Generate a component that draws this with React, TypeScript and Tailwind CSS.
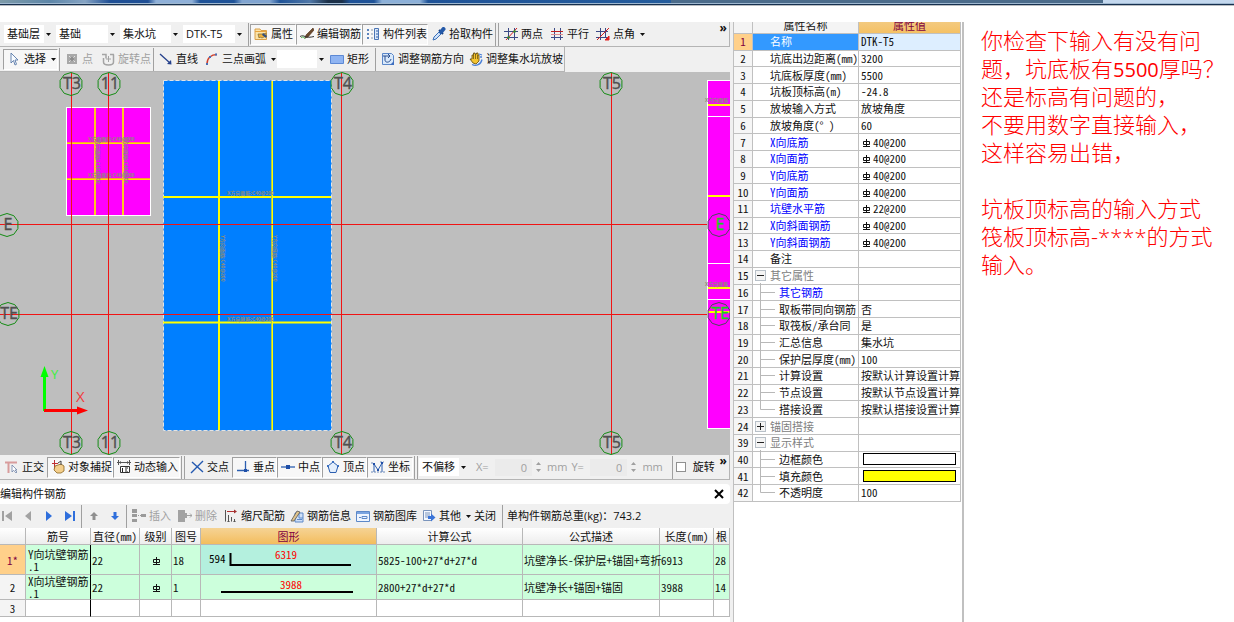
import type { ReactNode } from "react";

type IconName =
  | "props" | "pen" | "list" | "dropper" | "twoPoint" | "parallel" | "pointAngle"
  | "cursor" | "point" | "rotatePoint" | "line" | "arc" | "rect" | "direction" | "slope"
  | "ortho" | "snap" | "dynamic" | "cross" | "perp" | "mid" | "vertex" | "coord"
  | "first" | "prev" | "next" | "last" | "up" | "down"
  | "insert" | "remove" | "scale" | "info" | "library" | "other";

const ICONS: Record<IconName, ReactNode> = {
  props: (
    <>
      <path d="M1 2h5l1 1.500h5.500v9H1z" fill="#fbe3a8" stroke="#d9a04a" />
      <path d="M1 4.500h11.500" stroke="#e8a33c" />
      <path d="M4 7h5l3-1v3l-4 2-2-1-1 1z" fill="#f2b23a" stroke="#7b6a3a" strokeWidth=".7" />
      <path d="M9 6l4 3-1 2-4-3z" fill="#34507c" />
    </>
  ),
  pen: (
    <>
      <path d="M13 1 6 8l-1 3 3-1 6-7z" fill="#6b4a2c" stroke="#4b2a14" strokeWidth=".6" />
      <path d="M0 9.500c2-1 3-1 5 0s5 1 9 0" stroke="#333" />
      <path d="M1 11c2-2 3-1 4 1" stroke="#37a137" fill="none" />
    </>
  ),
  list: (
    <>
      <path d="M1 3h2M1 7h2M1 11h2" stroke="#5c84bc" strokeWidth="2" />
      <path d="M5 3h2M5 7h2M5 11h2" stroke="#8899aa" />
      <path d="M8.500 1.500h4v11h-4z" fill="#dbe8f8" stroke="#4a74b4" />
      <path d="M10 4h2M10 7h2M10 10h2" stroke="#2f5fa8" />
    </>
  ),
  dropper: (
    <>
      <path d="M1 13l1-3 5-5 2 2-5 5z" fill="#cfe2fa" stroke="#3a6fb8" />
      <path d="M7 3l4 4" stroke="#173a78" strokeWidth="2" />
      <path d="M9 5l2.500-3" stroke="#2459a8" strokeWidth="4" strokeLinecap="round" />
    </>
  ),
  twoPoint: (
    <>
      <path d="M4.500 1v12M10.500 1v12M0 4.500h14M0 10.500h14" stroke="#3c4a86" />
      <path d="M2 13 13 1" stroke="#d02020" />
      <circle cx="4.500" cy="10.500" r="1.300" fill="#2e8b2e" />
      <circle cx="10.500" cy="4.500" r="1.300" fill="#2e8b2e" />
    </>
  ),
  parallel: (
    <>
      <path d="M4.500 1v12M10.500 1v12" stroke="#3c4a86" />
      <path d="M1 4.500h12" stroke="#c02020" />
      <path d="M1 7.500h12" stroke="#e09090" />
      <path d="M1 10.500h12" stroke="#3c4a86" />
    </>
  ),
  pointAngle: (
    <>
      <path d="M4.500 1v12M9.500 1v9M0 4.500h12M0 10.500h12" stroke="#3c4a86" />
      <path d="M1 13 13 1" stroke="#d02020" />
      <path d="M13 9v4H9z" fill="#e02020" stroke="#e02020" />
    </>
  ),
  cursor: <path d="M4 1v10l2.500-2.500L8 13l1.500-.7L8 8h3z" fill="#f7fbff" stroke="#5878a8" strokeWidth=".9" />,
  point: (
    <>
      <path d="M2 2h10v10H2z" fill="#a8a8a8" />
      <path d="M4 4l6 6M10 4l-6 6" stroke="#e4e4e4" />
      <circle cx="7" cy="7" r="2" fill="#8c8c8c" />
    </>
  ),
  rotatePoint: (
    <>
      <path d="M1 2.500h4v4M2.500 6v4c0 4 10 4 10 0V2.500M9 2.500h4" stroke="#a4a4a4" strokeWidth="1.500" fill="none" />
      <path d="M7.500 4v6M5 7h5" stroke="#a4a4a4" />
    </>
  ),
  line: (
    <>
      <path d="M1 2l10 9" stroke="#24408c" strokeWidth="1.300" />
      <path d="M12.500 12.500 8 12l4-4z" fill="#24408c" />
    </>
  ),
  arc: (
    <>
      <path d="M2 12C2 6 6 2.500 12 2.500" stroke="#d0402c" strokeWidth="1.400" fill="none" />
      <path d="M1 11h2v2H1zM4 4h2v2H4zM10 1.500h2v2h-2z" fill="#4a6fb5" />
    </>
  ),
  rect: <path d="M.5 3.500h13v8H.5z" fill="#8fb4f2" stroke="#5c88d4" />,
  direction: (
    <>
      <path d="M1.500 1.500h9l2 2v9h-11z" fill="#d8e8fa" stroke="#5a86c8" />
      <path d="M4 4v4c0 3 5 3 6-1M2 4h7l-2-2M7 6l2-2" stroke="#2a4f90" fill="none" />
      <path d="M9 13l4-4v4z" fill="#3f6fc0" />
    </>
  ),
  slope: (
    <>
      <path d="M3 7V3h1.500V1H6v1h1.500V1H9v2h1v6l-3 3-3-1-3-4z" fill="#f4c430" stroke="#5e4708" strokeWidth=".8" />
      <path d="M4.500 3v4M6.500 2v5M8.500 3v4" stroke="#5e4708" strokeWidth=".7" />
      <path d="M3 12.500c4 2 9 0 10-5M10 2l3 1M11 5h2" stroke="#4a80d8" fill="none" strokeWidth="1.300" />
    </>
  ),
  ortho: (
    <>
      <path d="M0 2.500h12M3.500 2.500V13" stroke="#d89c9c" strokeWidth="2" />
      <path d="M7 5v7l1.700-1.700L11 13l1-1-2-2h2z" fill="#fff" stroke="#7084a8" strokeWidth=".8" />
    </>
  ),
  snap: (
    <>
      <path d="M1 3.500h6M3.500 0v10" stroke="#c03030" />
      <path d="M4 6l6-2 3 2v5l-3 2H6l-3-3z" fill="#f4cf8c" stroke="#8c6420" strokeWidth=".8" />
      <path d="M7 3l3-2v4" stroke="#444" fill="none" />
    </>
  ),
  dynamic: (
    <>
      <path d="M0 2.500h14M1.500 0v5M12.500 0v5" stroke="#555" />
      <path d="M2 2.500l2-1.500v3zM12 2.500l-2-1.500v3z" fill="#555" />
      <path d="M3.500 6.500h9v6h-9z" fill="#fff" stroke="#333" />
      <path d="M5.500 8v4M8 8h3M8 10h2M8 12h3" stroke="#222" />
    </>
  ),
  cross: <path d="M2 2l11 10M13 1 1 13" stroke="#2258b0" strokeWidth="1.400" />,
  perp: (
    <>
      <path d="M1 10.500h12M9.500 1v9" stroke="#2c5fb0" strokeWidth="1.300" />
      <path d="M8 9h3v3H8z" fill="#1f4fa8" />
    </>
  ),
  mid: (
    <>
      <path d="M0 7h14" stroke="#2c5fb0" strokeWidth="1.300" />
      <path d="M5 5h4v4H5z" fill="#1f4fa8" />
    </>
  ),
  vertex: (
    <>
      <path d="M7 2l5 4-2 6.500H4L2 6z" fill="#e4effc" stroke="#2c5fb0" />
      <path d="M6 1h2v2H6zM1 5h2v2H1zM11 5h2v2h-2z" fill="#3c70c0" />
    </>
  ),
  coord: (
    <>
      <path d="M3 12V4l4 6 4-7v9" stroke="#2c5fb0" fill="none" />
      <path d="M0 12h14M0 3h3M9 2h4" stroke="#6a88b8" strokeDasharray="2 1" />
      <path d="M2 3h2v2H2zM6 9h2v2H6zM10 2h2v2h-2z" fill="#1f4fa8" />
    </>
  ),
  first: <path d="M2 2h2v10H2zM12 2v10L5 7z" fill="#a2a2a2" />,
  prev: <path d="M10 2v10L4 7z" fill="#a2a2a2" />,
  next: <path d="M4 2v10l6-5z" fill="#2f6fdc" />,
  last: <path d="M10 2h2v10h-2zM2 2v10l7-5z" fill="#2f6fdc" />,
  up: <path d="M7 3l4 4H8.500v4h-3V7H3z" fill="#8f8f8f" />,
  down: <path d="M7 11 3 7h2.500V3h3v4H11z" fill="#2f6fdc" />,
  insert: (
    <>
      <path d="M0 0h5v4H0zM0 5h5v3H0zM0 10h5v3H0z" fill="#9a9a9a" />
      <path d="M6 6.500h3" stroke="#9a9a9a" strokeDasharray="1 1" />
      <path d="M9 5h5v3H9z" fill="#9a9a9a" />
    </>
  ),
  remove: (
    <>
      <path d="M0 1h7v3h2v5H7v4H0z" fill="#a2a2a2" />
      <path d="M9 6.500h5M12 4.500l2 2-2 2" stroke="#a2a2a2" fill="none" />
    </>
  ),
  scale: (
    <>
      <path d="M1.500 1v12M4.500 6v7M7.500 8v5M10.500 10v3" stroke="#555" />
      <path d="M3 2.500h8" stroke="#b03030" />
      <path d="M10 .5l3 2-3 2z" fill="#a03030" />
      <path d="M1 12.500h12" stroke="#999" strokeDasharray="1 1" />
    </>
  ),
  info: (
    <>
      <path d="M5 4h8v9H5z" fill="#cfe0f8" stroke="#5c88c8" />
      <path d="M9 4v5h4M7 10.500h5" stroke="#5c88c8" />
      <path d="M1 12 7 2l3 1-6 9z" fill="#e0c48c" stroke="#555" strokeWidth=".8" />
    </>
  ),
  library: (
    <>
      <path d="M.5 2.500h13v10H.5z" fill="#eef5ff" stroke="#5c88c8" />
      <path d="M1 4h12" stroke="#7aa4e0" strokeWidth="2" />
      <path d="M3 8.500h2M6 7.500h5v2H6z" stroke="#5c88c8" />
    </>
  ),
  other: (
    <>
      <path d="M1.500 1.500h8v10h-8z" fill="#f3f8ff" stroke="#7a94bc" />
      <path d="M3 4h5M3 6h5M3 8h3" stroke="#7a94bc" />
      <path d="M6 7h3V4.500L13.500 8.500 9 12.500V10H6z" fill="#3a74d8" />
    </>
  ),
};

function Icon({ name }: { name: IconName }) {
  return (
    <svg viewBox="0 0 14 14" className="size-[14px] shrink-0" fill="none" aria-hidden="true">
      {ICONS[name]}
    </svg>
  );
}

function Caret() {
  return (
    <svg viewBox="0 0 5 3" className="h-[3px] w-[5px] shrink-0" aria-hidden="true">
      <path d="M0 0h5L2.500 3z" fill="#111" />
    </svg>
  );
}

function Sep() {
  return <div className="mx-px h-[23px] w-px shrink-0 bg-[#a0a0a0]" />;
}

type ToolProps = {
  icon?: IconName;
  label: string;
  width?: string;
  pressed?: boolean;
  disabled?: boolean;
  caret?: boolean;
};

function Tool({ icon, label, width = "", pressed, disabled, caret }: ToolProps) {
  const look = pressed
    ? "border-t-[#a0a0a0] border-l-[#a0a0a0] border-r-white border-b-white bg-[#f7f7f7]"
    : "border-transparent";
  return (
    <button
      type="button"
      disabled={disabled}
      className={`flex h-[21px] shrink-0 items-center gap-[3px] border pl-[3px] whitespace-nowrap ${look} ${width} ${disabled ? "text-[#a0a0a0]" : ""}`}
    >
      {icon && <Icon name={icon} />}
      <span>{label}</span>
      {caret && <span className="ml-0.5"><Caret /></span>}
    </button>
  );
}

function IconButton({ icon, label }: { icon: IconName; label: string }) {
  return (
    <button type="button" aria-label={label} className="flex w-[21px] shrink-0 justify-center">
      <Icon name={icon} />
    </button>
  );
}

function Combo({ label, value, width }: { label: string; value: string; width: string }) {
  return (
    <div className={`relative h-[18px] shrink-0 bg-white ${width}`}>
      <select aria-label={label} className="h-full w-full appearance-none pl-[3px] outline-none">
        <option>{value}</option>
      </select>
      <div className="pointer-events-none absolute inset-y-0 right-0 flex w-[9px] items-center justify-center bg-[#f0f0f0]">
        <Caret />
      </div>
    </div>
  );
}

function OffsetInput({ label }: { label: string }) {
  return (
    <label className="flex shrink-0 items-center text-[#a0a0a0]">
      <span className="w-[19px]">{label}</span>
      <input defaultValue="0" disabled className="h-[17px] w-[37px] bg-[#ebebeb] pr-[5px] text-right" />
      <svg viewBox="0 0 12 14" className="h-[14px] w-[12px]" aria-hidden="true">
        <path d="M4 5l2.500-3L9 5zM4 9l2.500 3L9 9z" fill="#a0a0a0" />
      </svg>
      <span className="pl-[3px]">mm</span>
    </label>
  );
}

function More() {
  return <button type="button" aria-label="more" className="mr-0.5 ml-auto self-start text-xs leading-3 font-bold">»</button>;
}

/* axis bubbles on the drawing */
const RING = Array.from({ length: 10 }, (_, i) => {
  const a = (Math.PI * i) / 5;
  return `${(11.5 * Math.sin(a)).toFixed(1)},${(-11.5 * Math.cos(a)).toFixed(1)}`;
}).join(" ");

const BUBBLES = [
  { x: 71, y: 84, text: "T3" },
  { x: 109, y: 84, text: "11" },
  { x: 342, y: 84, text: "T4" },
  { x: 611, y: 84, text: "T5" },
  { x: 71, y: 443, text: "T3" },
  { x: 109, y: 443, text: "11" },
  { x: 342, y: 443, text: "T4" },
  { x: 611, y: 443, text: "T5" },
  { x: 7, y: 225, text: "E" },
  { x: 8, y: 314, text: "TE" },
  { x: 719, y: 225, text: "E", green: true },
  { x: 719, y: 314, text: "TE", green: true },
];

const BAR_NOTES = [
  { x: 88, y: 141, text: "X方向面筋:C40@200" },
  { x: 88, y: 177, text: "X方向底筋:C40@200" },
  { x: 227, y: 195, text: "X方向面筋:C40@200" },
  { x: 227, y: 321, text: "X方向底筋:C40@200" },
  { x: 705, y: 102, text: "X方向面筋" },
  { x: 705, y: 286, text: "X方向底筋" },
];

const BAR_NOTES_VERTICAL = [
  { x: 96, y: 137, text: "Y方向面筋:C40@200" },
  { x: 124, y: 137, text: "Y方向底筋:C40@200" },
  { x: 221, y: 235, text: "Y方向面筋:C40@200" },
  { x: 273, y: 235, text: "Y方向底筋:C40@200" },
];

function Drawing() {
  return (
    <div className="h-[383px] overflow-hidden bg-[#bebebe]">
      <svg viewBox="0 72 730 383" className="h-[383px] w-[730px]">
        <rect x="66.500" y="107.500" width="84" height="108" fill="#ff00ff" stroke="#fff" />
        <path d="M95 108v107M123 108v107" stroke="#ffc81e" strokeWidth="2" />
        <path d="M67 143h83M67 179h83" stroke="#ff9a3c" strokeWidth="2" />
        <path d="M67 143.500h83M67 179.500h83" stroke="#ffe000" />
        <rect x="163.500" y="80.500" width="168" height="350" fill="#007fff" />
        <rect x="163.500" y="80.500" width="168" height="350" fill="none" stroke="#e4e4e4" strokeDasharray="4 2" />
        <path d="M219 81v349M272 81v349M163 197h168M163 322.500h168" stroke="#ffff00" strokeWidth="2" />
        <path d="M271.500 81v349" stroke="#a8c850" />
        <rect x="707.500" y="80.500" width="30" height="348" fill="#ff00ff" stroke="#fff" />
        <path d="M708 116.500h22M708 263.500h22M708 299.500h22" stroke="#fff" />
        <path d="M708 105h22M708 196h22M708 288h22M708 312h22" stroke="#ffff00" strokeWidth="2" />
        <g fill="#8c8c78" fontSize="5" fontWeight="700">
          {BAR_NOTES.map((n) => (
            <text key={`${n.x}-${n.y}`} x={n.x} y={n.y}>{n.text}</text>
          ))}
          {BAR_NOTES_VERTICAL.map((n) => (
            <text key={n.x} transform={`translate(${n.x} ${n.y}) rotate(90)`}>{n.text}</text>
          ))}
        </g>
        <path d="M71.500 73v381M108.500 73v381M341.500 73v381M611.500 73v381M0 224.500h707M0 314.500h707" stroke="#f01414" />
        {BUBBLES.map((b) => (
          <g key={`${b.x}-${b.y}`} transform={`translate(${b.x} ${b.y})`}>
            <polygon points={RING} fill="none" stroke={b.green ? "#4a4a5a" : "#148c14"} />
            <text
              x="1"
              y="5"
              fontSize="16"
              fontWeight="500"
              textAnchor="middle"
              fill={b.green ? "#1ec81e" : "#505050"}
              stroke={b.green ? "#1ec81e" : "#505050"}
              strokeWidth=".4"
            >
              {b.text}
            </text>
          </g>
        ))}
        <path d="M44.500 411v-36" stroke="#00ff00" strokeWidth="3" />
        <path d="M44.500 366l4 11h-8z" fill="#00ff00" />
        <path d="M44 410.500h34" stroke="#ff0000" strokeWidth="3" />
        <path d="M88 410.500l-11 4v-8z" fill="#ff0000" />
        <text x="51" y="379" fontSize="13" fill="#3cf03c">Y</text>
        <text x="76" y="402" fontSize="15" fill="#f03c3c">X</text>
      </svg>
    </div>
  );
}

function RebarSign() {
  return (
    <svg viewBox="0 0 9 9" className="inline h-[9px] w-[9px] align-[-1px]" fill="none" stroke="#111" aria-label="HRB400">
      <path d="M1.500 2.500h6v3h-6zM4.500 0v8M1 7.500h7" />
    </svg>
  );
}

type Row = {
  no: number;
  name: string;
  value?: string;
  rebar?: boolean;
  blue?: boolean;
  toggle?: "+" | "-";
  child?: "mid" | "end";
  swatch?: string;
};

const ROWS: Row[] = [
  { no: 1, name: "名称", value: "DTK-T5" },
  { no: 2, name: "坑底出边距离(mm)", value: "3200" },
  { no: 3, name: "坑底板厚度(mm)", value: "5500" },
  { no: 4, name: "坑板顶标高(m)", value: "-24.8" },
  { no: 5, name: "放坡输入方式", value: "放坡角度" },
  { no: 6, name: "放坡角度(° )", value: "60" },
  { no: 7, name: "X向底筋", value: "40@200", rebar: true, blue: true },
  { no: 8, name: "X向面筋", value: "40@200", rebar: true, blue: true },
  { no: 9, name: "Y向底筋", value: "40@200", rebar: true, blue: true },
  { no: 10, name: "Y向面筋", value: "40@200", rebar: true, blue: true },
  { no: 11, name: "坑壁水平筋", value: "22@200", rebar: true, blue: true },
  { no: 12, name: "X向斜面钢筋", value: "40@200", rebar: true, blue: true },
  { no: 13, name: "Y向斜面钢筋", value: "40@200", rebar: true, blue: true },
  { no: 14, name: "备注" },
  { no: 15, name: "其它属性", toggle: "-" },
  { no: 16, name: "其它钢筋", blue: true, child: "mid" },
  { no: 17, name: "取板带同向钢筋", value: "否", child: "mid" },
  { no: 18, name: "取筏板/承台同", value: "是", child: "mid" },
  { no: 19, name: "汇总信息", value: "集水坑", child: "mid" },
  { no: 20, name: "保护层厚度(mm)", value: "100", child: "mid" },
  { no: 21, name: "计算设置", value: "按默认计算设置计算", child: "mid" },
  { no: 22, name: "节点设置", value: "按默认节点设置计算", child: "mid" },
  { no: 23, name: "搭接设置", value: "按默认搭接设置计算", child: "end" },
  { no: 24, name: "锚固搭接", toggle: "+" },
  { no: 39, name: "显示样式", toggle: "-" },
  { no: 40, name: "边框颜色", child: "mid", swatch: "bg-white" },
  { no: 41, name: "填充颜色", child: "mid", swatch: "bg-[#ffff00]" },
  { no: 42, name: "不透明度", value: "100", child: "end" },
];

function Branch({ end }: { end: boolean }) {
  return (
    <svg viewBox="0 0 26 15" className="h-[15px] w-[26px] shrink-0 overflow-visible" fill="none" stroke="#b8b8b8" aria-hidden="true">
      <path d={end ? "M7.500 -2V7.500H22" : "M7.500 -2V17M7.500 7.500H22"} />
    </svg>
  );
}

function NameCell({ row }: { row: Row }) {
  const color = row.toggle ? "text-[#808080]" : row.blue ? "text-[#0000ff]" : "";
  return (
    <div className={`flex items-center whitespace-nowrap ${color}`}>
      {row.child && <Branch end={row.child === "end"} />}
      {row.toggle && (
        <button type="button" aria-label={row.name} className="mr-1 ml-0.5 flex size-[11px] items-center justify-center border border-[#b8c0c8] bg-[#f4f4f4] text-black">
          <svg viewBox="0 0 7 7" className="size-[7px]" stroke="#222" aria-hidden="true">
            <path d={row.toggle === "+" ? "M0 3.500h7M3.500 0v7" : "M0 3.500h7"} />
          </svg>
        </button>
      )}
      <span className={row.child || row.toggle ? "" : "pl-[17px]"}>{row.name}</span>
    </div>
  );
}

function Properties() {
  return (
    <section className="w-[231px] shrink-0 border-r-2 border-l border-[#c0c0c0]">
      <table className="h-[480px] w-[227px] table-fixed border-separate border-spacing-0 font-['Noto_Sans_Mono_CJK_SC','Noto_Sans_CJK_SC',monospace]">
        <colgroup>
          <col className="w-[19px]" />
          <col className="w-[106px]" />
          <col className="w-[102px]" />
        </colgroup>
        <thead>
          <tr className="h-3 font-normal">
            <th className="border-r border-b border-[#c0c0c0] bg-[#f4f4f4]" />
            <th className="border-r border-b border-[#c0c0c0] bg-[#f4f4f4] font-normal">
              <div className="h-[11px] overflow-hidden leading-[6px]">属性名称</div>
            </th>
            <th className="border-r border-b border-[#c0c0c0] bg-linear-to-b from-[#f3ca80] to-[#f5c163] font-normal text-[#800040]">
              <div className="h-[11px] overflow-hidden leading-[6px]">属性值</div>
            </th>
          </tr>
        </thead>
        <tbody className="leading-[15px]">
          {ROWS.map((row) => {
            const active = row.no === 1;
            return (
              <tr key={row.no}>
                <td className={`border-r border-b border-[#c0c0c0] text-center ${active ? "bg-[#ffd08a] text-[#800040]" : "bg-[#f6f6f6]"}`}>
                  {row.no}
                </td>
                <td className={`border-r border-b border-[#c0c0c0] ${active ? "bg-[#3399ff] text-white" : ""}`}>
                  <NameCell row={row} />
                </td>
                <td className={`border-r border-b border-[#c0c0c0] pl-0.5 whitespace-nowrap ${active ? "bg-[#ddeeff]" : ""}`}>
                  {row.swatch && <div className={`mr-1 ml-0.5 h-3 border border-black ${row.swatch}`} />}
                  {row.rebar && <span className="mr-0.5 ml-px inline-block"><RebarSign /></span>}
                  {row.value}
                </td>
              </tr>
            );
          })}
        </tbody>
      </table>
    </section>
  );
}

const BARS = [
  { no: "1*", name: "Y向坑壁钢筋", dia: "22", shape: "18", formula: "5825-100+27*d+27*d", desc: "坑壁净长-保护层+锚固+弯折", length: "6913", count: "28" },
  { no: "2", name: "X向坑壁钢筋", dia: "22", shape: "1", formula: "2800+27*d+27*d", desc: "坑壁净长+锚固+锚固", length: "3988", count: "14" },
];

const HEADS = ["", "筋号", "直径(mm)", "级别", "图号", "图形", "计算公式", "公式描述", "长度(mm)", "根"];

function BarShape({ bent }: { bent: boolean }) {
  return bent ? (
    <svg viewBox="0 0 175 29" className="block h-[29px] w-[175px]">
      <path d="M29.500 8v12H150" fill="none" stroke="#000" strokeWidth="2" />
      <text x="8" y="18" fontSize="11">594</text>
      <text x="74" y="14" fontSize="11" fill="#ff0000">6319</text>
    </svg>
  ) : (
    <svg viewBox="0 0 175 24" className="block h-6 w-[175px]">
      <path d="M20 17H152" stroke="#000" strokeWidth="2" />
      <text x="79" y="14" fontSize="11" fill="#ff0000">3988</text>
    </svg>
  );
}

function BarTable() {
  const cell = "border-r border-b border-[#b8b8b8] pl-px";
  return (
    <table className="w-full table-fixed border-separate border-spacing-0 leading-3 font-['Noto_Sans_Mono_CJK_SC','Noto_Sans_CJK_SC',monospace]">
      <colgroup>
        <col className="w-[26px]" />
        <col className="w-[65px]" />
        <col className="w-[49px]" />
        <col className="w-[32px]" />
        <col className="w-[29px]" />
        <col className="w-[176px]" />
        <col className="w-[146px]" />
        <col className="w-[137px]" />
        <col className="w-[54px]" />
        <col />
      </colgroup>
      <thead>
        <tr className="h-[17px]">
          {HEADS.map((h) => (
            <th
              key={h}
              className={`overflow-hidden border-r border-b border-[#b8b8b8] font-normal whitespace-nowrap ${h === "图形" ? "bg-linear-to-b from-[#f5d394] to-[#f3bd5c] text-[#800040]" : "bg-linear-to-b from-white to-[#ededed]"}`}
            >
              {h}
            </th>
          ))}
        </tr>
      </thead>
      <tbody>
        {BARS.map((b, i) => (
          <tr key={b.no} className={`bg-[#ccffdc] ${i === 0 ? "h-[30px]" : "h-[25px]"}`}>
            <td className={`border-r border-b border-[#b8b8b8] text-center ${i === 0 ? "bg-[#ffd08a] text-[#800040]" : "bg-[#f4f4f4]"}`}>{b.no}</td>
            <td className="border-r border-b border-[#b8b8b8] border-r-black pl-0.5 whitespace-nowrap">
              {b.name}
              <br />
              .1
            </td>
            <td className={cell}>{b.dia}</td>
            <td className={`${cell} text-center`}><RebarSign /></td>
            <td className={cell}>{b.shape}</td>
            <td className={`border-r border-b border-[#b8b8b8] ${i === 0 ? "bg-[#b4f0de]" : ""}`}><BarShape bent={i === 0} /></td>
            <td className={cell}>{b.formula}</td>
            <td className={`${cell} whitespace-nowrap`}>{b.desc}</td>
            <td className={cell}>{b.length}</td>
            <td className={cell}>{b.count}</td>
          </tr>
        ))}
        <tr className="h-[17px] bg-white">
          <td className="border-r border-b border-[#b8b8b8] bg-[#f4f4f4] text-center">3</td>
          <td className="border-r border-b border-[#b8b8b8] border-r-black" />
          {HEADS.slice(2).map((h) => (
            <td key={h} className={cell} />
          ))}
        </tr>
      </tbody>
    </table>
  );
}

function Workspace() {
  return (
    <main className="min-w-0 flex-1 overflow-hidden bg-[#f0f0f0]">
      <div className="flex h-[25px] items-center gap-[3px] overflow-hidden border-r border-b border-[#b4b4b4] pl-1">
        <Combo label="楼层" value="基础层" width="w-[49px]" />
        <Combo label="类别" value="基础" width="w-[61px]" />
        <Combo label="构件类型" value="集水坑" width="w-[60px]" />
        <Combo label="构件" value="DTK-T5" width="w-[61px]" />
        <div className="flex min-w-0 flex-1 items-center self-stretch">
          <Sep />
          <Tool icon="props" label="属性" width="w-[46px]" pressed />
          <Tool icon="pen" label="编辑钢筋" width="w-[66px]" pressed />
          <Tool icon="list" label="构件列表" width="w-[66px]" pressed />
          <Tool icon="dropper" label="拾取构件" width="w-[66px]" />
          <Sep />
          <Sep />
          <Tool icon="twoPoint" label="两点" width="w-[46px]" />
          <Tool icon="parallel" label="平行" width="w-[46px]" />
          <Tool icon="pointAngle" label="点角" caret />
          <More />
        </div>
      </div>
      <div className="flex h-[25px] w-[565px] items-center overflow-hidden border-r border-b border-[#b4b4b4] pl-[3px]">
        <Tool icon="cursor" label="选择" width="w-[55px]" pressed caret />
        <Sep />
        <Tool icon="point" label="点" width="w-[36px]" disabled />
        <Tool icon="rotatePoint" label="旋转点" width="w-[55px]" disabled />
        <Sep />
        <Tool icon="line" label="直线" width="w-[46px]" />
        <Tool icon="arc" label="三点画弧" width="w-[76px]" caret />
        <Combo label="画法" value="" width="w-[49px]" />
        <Tool icon="rect" label="矩形" width="w-[48px]" />
        <Sep />
        <Tool icon="direction" label="调整钢筋方向" width="w-[88px]" />
        <Tool icon="slope" label="调整集水坑放坡" />
      </div>
      <Drawing />
      <div className="flex h-[25px] items-center overflow-hidden border-r border-b border-[#b4b4b4] pl-px">
        <Tool icon="ortho" label="正交" width="w-[46px]" />
        <Tool icon="snap" label="对象捕捉" width="w-[66px]" pressed />
        <Tool icon="dynamic" label="动态输入" width="w-[67px]" pressed />
        <Sep />
        <Sep />
        <Tool icon="cross" label="交点" width="w-[46px]" />
        <Tool icon="perp" label="垂点" width="w-[45px]" pressed />
        <Tool icon="mid" label="中点" width="w-[45px]" pressed />
        <Tool icon="vertex" label="顶点" width="w-[45px]" pressed />
        <Tool icon="coord" label="坐标" width="w-[46px]" pressed />
        <Sep />
        <Sep />
        <Combo label="偏移方式" value="不偏移" width="w-[49px]" />
        <div className="flex items-center gap-1 px-2">
          <OffsetInput label="X=" />
          <OffsetInput label="Y=" />
        </div>
        <Sep />
        <label className="flex shrink-0 items-center gap-[7px] pl-0.5">
          <input type="checkbox" className="size-[10px] appearance-none border border-[#909090] bg-white" />
          旋转
        </label>
        <More />
      </div>
      <div className="mt-1 flex h-[20px] items-center justify-between rounded-r-sm bg-white">
        <h2>编辑构件钢筋</h2>
        <button type="button" aria-label="关闭窗口" className="mr-[6px]">
          <svg viewBox="0 0 10 10" className="size-[10px]" stroke="#000" strokeWidth="2" aria-hidden="true">
            <path d="M1 1l8 8M9 1l-8 8" />
          </svg>
        </button>
      </div>
      <div className="flex h-6 items-center overflow-hidden">
        <div className="-ml-1 flex">
          <IconButton icon="first" label="第一条" />
          <IconButton icon="prev" label="上一条" />
          <IconButton icon="next" label="下一条" />
          <IconButton icon="last" label="最后一条" />
        </div>
        <Sep />
        <IconButton icon="up" label="上移" />
        <IconButton icon="down" label="下移" />
        <Sep />
        <Tool icon="insert" label="插入" width="w-[46px]" disabled />
        <Tool icon="remove" label="删除" width="w-[46px]" disabled />
        <Tool icon="scale" label="缩尺配筋" width="w-[66px]" />
        <Tool icon="info" label="钢筋信息" width="w-[66px]" />
        <Tool icon="library" label="钢筋图库" width="w-[66px]" />
        <Tool icon="other" label="其他" width="w-[52px]" caret />
        <Tool label="关闭" width="w-[31px]" />
        <Sep />
        <span className="pl-[3px] whitespace-nowrap">单构件钢筋总重(kg)：743.2</span>
      </div>
      <BarTable />
      <div className="h-[6px] bg-white" />
    </main>
  );
}

const NOTES_TOP = ["还是标高有问题的，", "不要用数字直接输入，", "这样容易出错，"];

export default function App() {
  return (
    <div className="min-h-screen bg-white font-['Open_Sans','Noto_Sans_CJK_SC',sans-serif] text-[11px] leading-4 text-[#111]">
      <header>
        <div className="flex h-[3px]">
          <div className="flex-1 bg-[linear-gradient(90deg,#7d9aa8_0px,#5d86a8_50px,#86a4c4_85px,#1f4f95_110px,#1f4f95_148px,#8fb0d8_156px,#8fb0d8_192px,#1f5398_200px,#1f5398_234px,#80a4d0_242px,#80a4d0_270px,#1f5398_280px,#5078a8_310px,#1c3048_328px,#1c3048_342px,#1f5398_350px,#1f5398_374px,#8cb0d8_382px,#8cb0d8_420px,#1f5398_428px,#245c9c_100%)]" />
          <div className="w-[432px] bg-[#4b6b8a]" />
          <div className="w-[131px] bg-[#c4d8ee]" />
        </div>
        <div className="h-px bg-[#9fb8d0]" />
        <div className="h-px bg-[#16304f]" />
        <div className="h-px bg-[#b8bcc0]" />
      </header>
      <div className="mt-4 flex">
        <Workspace />
        <div className="w-[3px] shrink-0 bg-[#f0f0f0]" />
        <Properties />
        <article className="w-[270px] shrink-0 pt-1 pl-[17px] text-[22px] leading-7 font-light whitespace-nowrap text-[#ff0000]">
          <p>
            你检查下输入有没有问
            <br />
            题，坑底板有<span className="text-xl leading-none font-medium">5500</span>厚吗？
          </p>
          {NOTES_TOP.map((line) => (
            <p key={line}>{line}</p>
          ))}
          <p className="mt-7">坑板顶标高的输入方式</p>
          <p>
            筏板顶标高-****的方式
            <br />
            输入。
          </p>
        </article>
      </div>
    </div>
  );
}
